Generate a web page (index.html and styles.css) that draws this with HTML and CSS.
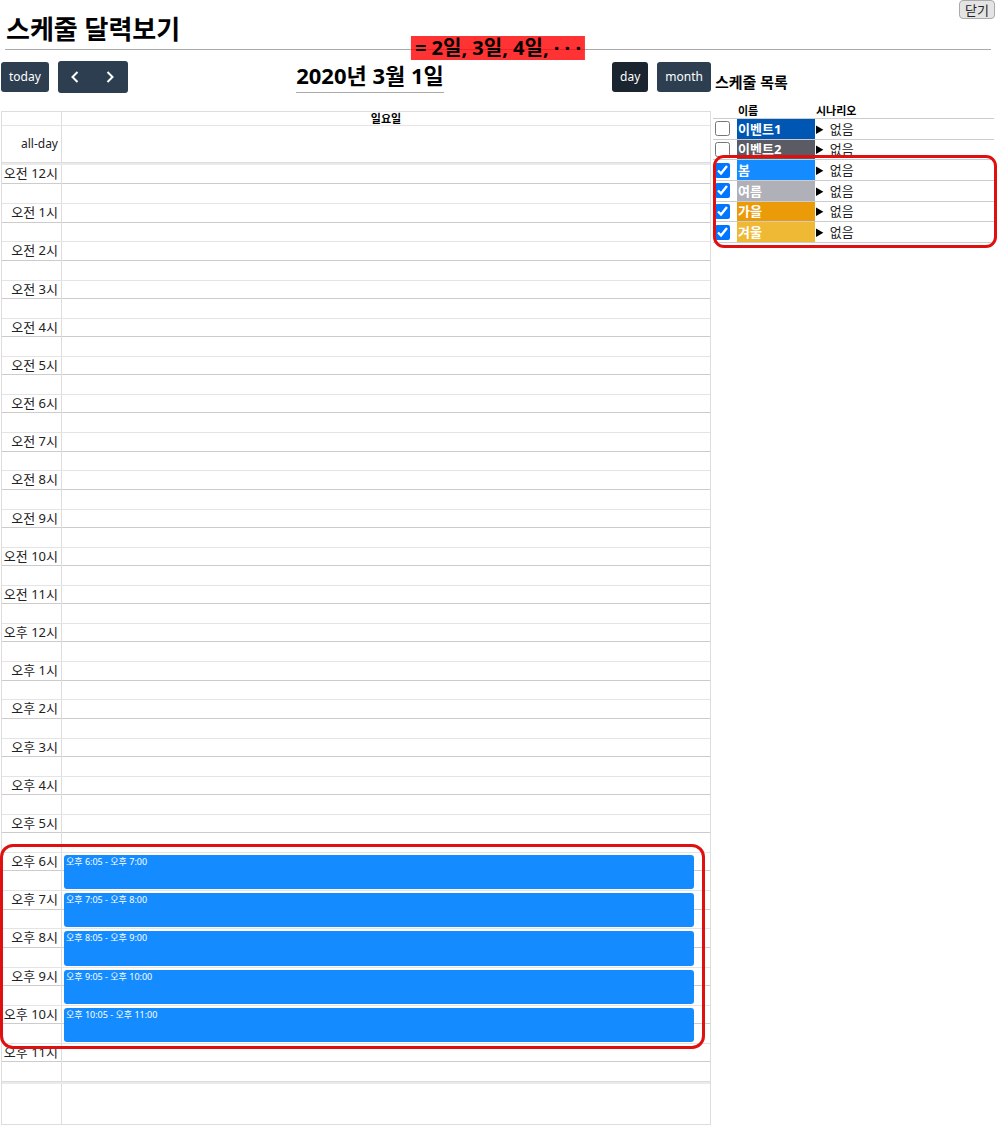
FILE: index.html
```html
<!DOCTYPE html>
<html lang="ko">
<head>
<meta charset="utf-8">
<title>스케줄 달력보기</title>
<link rel="stylesheet" href="styles.css">
</head>
<body>
<header class="page-header">
  <h1 class="page-title">스케줄 달력보기</h1>
  <button type="button" class="close-button">닫기</button>
  <p class="day-note">= 2일, 3일, 4일, · · ·</p>
</header>
<div class="layout">
  <main class="calendar">
    <div class="toolbar">
      <div class="toolbar-group">
        <button type="button" class="button">today</button>
        <div class="nav-buttons">
          <button type="button" class="nav-button" aria-label="이전"><svg class="chevron" viewBox="0 0 8 12"><path d="M6.500 1L1.500 6L6.500 11"/></svg></button>
          <button type="button" class="nav-button" aria-label="다음"><svg class="chevron" viewBox="0 0 8 12"><path d="M1.500 1L6.500 6L1.500 11"/></svg></button>
        </div>
      </div>
      <h2 class="date-title">2020년 3월 1일</h2>
      <div class="toolbar-group">
        <button type="button" class="button button-active">day</button>
        <button type="button" class="button">month</button>
      </div>
    </div>
    <div class="day-grid">
      <div class="grid-row day-head"><div class="axis"></div><div class="day-name">일요일</div></div>
      <div class="grid-row all-day"><div class="axis">all-day</div><div></div></div>
      <div class="divider"></div>
      <div class="slots" id="slots"><div class="event-outline"></div></div>
      <div class="divider"></div>
      <div class="grid-row day-foot"><div class="axis"></div><div></div></div>
    </div>
  </main>
  <aside class="schedule">
    <h2 class="schedule-title">스케줄 목록</h2>
    <div class="schedule-list">
      <table class="schedule-table">
        <thead><tr><th class="check-col"></th><th class="name-col">이름</th><th>시나리오</th></tr></thead>
        <tbody class="schedule-rows">
          <tr><td><input type="checkbox" id="s1" class="check"></td><td class="name event-one"><label for="s1">이벤트1</label></td><td><details><summary>없음</summary></details></td></tr>
          <tr><td><input type="checkbox" id="s2" class="check"></td><td class="name event-two"><label for="s2">이벤트2</label></td><td><details><summary>없음</summary></details></td></tr>
          <tr><td><input type="checkbox" id="s3" class="check" checked></td><td class="name spring"><label for="s3">봄</label></td><td><details><summary>없음</summary></details></td></tr>
          <tr><td><input type="checkbox" id="s4" class="check" checked></td><td class="name summer"><label for="s4">여름</label></td><td><details><summary>없음</summary></details></td></tr>
          <tr><td><input type="checkbox" id="s5" class="check" checked></td><td class="name autumn"><label for="s5">가을</label></td><td><details><summary>없음</summary></details></td></tr>
          <tr><td><input type="checkbox" id="s6" class="check" checked></td><td class="name winter"><label for="s6">겨울</label></td><td><details><summary>없음</summary></details></td></tr>
        </tbody>
      </table>
      <div class="season-outline"></div>
    </div>
  </aside>
</div>
<script src="calendar.js"></script>
</body>
</html>
```
FILE: styles.css
```css
* { box-sizing: border-box; }
body {
  margin: 0;
  background: #fff;
  color: #000;
  font: 13px/18px "Noto Sans", "Noto Sans CJK KR", sans-serif;
}
h1, h2, p { margin: 0; }
button { font-family: inherit; cursor: pointer; }

.page-header {
  position: relative;
  margin: 0 6px 0 5px;
  padding: 10px 0 0 1px;
  height: 50px;
  border-bottom: 1px solid #aaa;
}
.page-title { font-size: 26px; line-height: 38px; }
.close-button {
  position: absolute;
  top: 0;
  right: -4px;
  height: 19px;
  padding: 0 5px;
  border: 1px solid #aaa;
  border-radius: 4px;
  background: #e4e4e4;
  color: #222;
  font-size: 13px;
  line-height: 16px;
}
.day-note {
  position: absolute;
  top: 36px;
  left: 50%;
  transform: translateX(-50%);
  padding: 0 4px;
  background: rgba(255, 0, 0, .8);
  font-size: 20px;
  font-weight: 700;
  line-height: 24px;
  white-space: nowrap;
}

.layout { display: flex; gap: 2px; padding: 11px 3px 0 1px; }
.calendar { flex: 1; min-width: 0; }
.toolbar { display: flex; justify-content: space-between; align-items: center; height: 32px; margin-bottom: 18px; }
.toolbar-group { display: flex; align-items: center; gap: 9px; }
.button {
  height: 30px;
  padding: 0 8px;
  border: 0;
  border-radius: 3px;
  background: #2c3e50;
  color: #fff;
  font-size: 12px;
  line-height: 18px;
}
.button-active { background: #1a252f; }
.nav-buttons { display: flex; height: 32px; border-radius: 3px; background: #2c3e50; }
.nav-button { display: flex; align-items: center; justify-content: center; width: 35px; padding: 0; border: 0; background: none; }
.chevron { width: 8px; height: 12px; fill: none; stroke: #fff; stroke-width: 2; }
.date-title { height: 32px; border-bottom: 1px solid #aaa; font-size: 22px; line-height: 29px; }

.day-grid { border: 1px solid #ddd; }
.grid-row { display: grid; grid-template-columns: 60px 1fr; }
.axis { padding-right: 3px; border-right: 1px solid #ddd; color: #222; text-align: right; white-space: nowrap; }
.day-head { height: 14px; border-bottom: 1px solid #e4e4e4; }
.day-name { font-size: 11px; font-weight: 700; line-height: 13px; text-align: center; }
.all-day { height: 36px; line-height: 36px; font-size: 12px; }
.day-foot { height: 40px; }
.divider { height: 3px; border-top: 1px solid #ddd; background: #eaeaea; }
.slots { position: relative; display: grid; grid-auto-rows: 1fr; height: 916px; line-height: 16px; }
.hour {
  position: relative;
  background: linear-gradient(#ccc, #ccc) 0 48% / 100% 1px no-repeat;
}
.hour + .hour { border-top: 1px solid #e4e4e4; }
.event {
  position: absolute;
  top: 2px;
  right: 16px;
  bottom: 1px;
  left: 62px;
  padding: 0 2px;
  border-radius: 3px;
  background: #148cff;
  color: #fff;
  font-size: 9px;
  line-height: 13px;
}
.event-outline {
  position: absolute;
  right: 5px;
  bottom: 32px;
  left: -2px;
  height: 205px;
  border: 3px solid #e01010;
  border-radius: 13px;
  z-index: 1;
}

.schedule { width: 281px; padding-top: 10px; }
.schedule-title { padding-left: 2px; font-size: 15px; line-height: 22px; }
.schedule-list { position: relative; margin-top: 11px; }
.schedule-table { width: 100%; border-collapse: collapse; table-layout: fixed; }
.schedule-table th { padding: 0 1px; font-size: 11px; line-height: 14px; text-align: left; }
.check-col { width: 24px; }
.name-col { width: 78px; }
.schedule-rows { height: 124px; }
.schedule-table td { padding: 0 1px; border-top: 1px solid #ccc; border-bottom: 1px solid #ccc; line-height: 18px; }
.check { display: block; width: 15px; height: 15px; margin: 0 1px; }
.name { color: #fff; font-weight: 700; }
.name label { display: block; }
.event-one { background: #0057b3; }
.event-two { background: #5b5b66; }
.spring { background: #148cff; }
.summer { background: #b0b0b9; }
.autumn { background: #ec9b08; }
.winter { background: #efb935; }
summary { color: #222; cursor: pointer; }
summary::marker { color: #000; }
.season-outline {
  position: absolute;
  top: 51px;
  right: -3px;
  bottom: -5px;
  left: 0;
  border: 3px solid #e01010;
  border-radius: 11px;
  pointer-events: none;
}
```
FILE: calendar.js
```js
const slots = document.getElementById("slots");
const events = {
  18: "오후 6:05 - 오후 7:00",
  19: "오후 7:05 - 오후 8:00",
  20: "오후 8:05 - 오후 9:00",
  21: "오후 9:05 - 오후 10:00",
  22: "오후 10:05 - 오후 11:00"
};
for (let hour = 0; hour < 24; hour++) {
  const row = document.createElement("div");
  row.className = "grid-row hour";
  const axis = document.createElement("div");
  axis.className = "axis";
  axis.textContent = (hour < 12 ? "오전 " : "오후 ") + (hour % 12 || 12) + "시";
  row.append(axis, document.createElement("div"));
  if (events[hour]) {
    const event = document.createElement("div");
    event.className = "event";
    event.textContent = events[hour];
    row.append(event);
  }
  slots.append(row);
}
```
